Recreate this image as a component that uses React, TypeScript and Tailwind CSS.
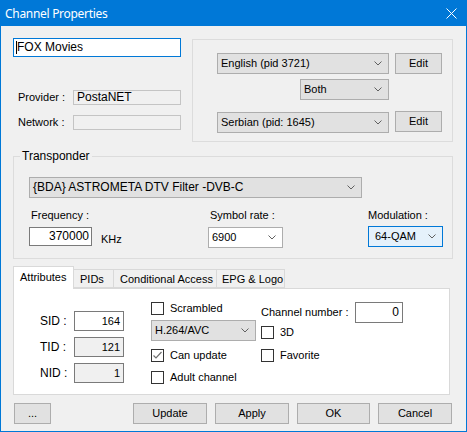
import React from 'react';

function Chevron() {
    return (
        <svg width="8" height="5" viewBox="0 0 8 5" className="shrink-0">
            <polyline points="0.5,0.5 4,4 7.5,0.5" fill="none" stroke="#606060" strokeWidth="1" />
        </svg>
    );
}

function Combo({ text, className = '', focused = false }: { text: string; className?: string; focused?: boolean }) {
    const tone = focused ? 'border-[#0078d7] bg-[#e5f1fb]' : 'border-[#adadad] bg-[#e1e1e1]';
    return (
        <div className={`flex items-center justify-between h-[21px] border pl-[3px] pr-[6px] ${tone} ${className}`}>
            <span className="whitespace-nowrap">{text}</span>
            <Chevron />
        </div>
    );
}

function Button({ label, className = '' }: { label: string; className?: string }) {
    return (
        <div className={`flex items-center justify-center h-[21px] border border-[#adadad] bg-[#e1e1e1] ${className}`}>
            {label}
        </div>
    );
}

function CheckBox({ label, checked = false, className = '' }: { label: string; checked?: boolean; className?: string }) {
    return (
        <div className={`flex items-center h-[13px] ${className}`}>
            <div className="w-[13px] h-[13px] border border-[#333333] bg-white flex items-center justify-center">
                {checked && (
                    <svg width="9" height="9" viewBox="0 0 9 9">
                        <polyline points="0.5,4.5 3,7 8.5,1" fill="none" stroke="#707070" strokeWidth="1.2" />
                    </svg>
                )}
            </div>
            <span className="ml-[6px] whitespace-nowrap">{label}</span>
        </div>
    );
}

function NumBox({ value, disabled = false }: { value: string; disabled?: boolean }) {
    return (
        <div className={`flex items-center justify-end w-[50px] h-[20px] border border-[#7a7a7a] pr-[3px] ${disabled ? 'bg-[#f0f0f0]' : 'bg-white'}`}>
            {value}
        </div>
    );
}

export default function App() {
    return (
        <div className="w-[467px] h-[432px] bg-[#0078d7] flex flex-col px-px pb-px text-[11px] leading-[13px] text-black whitespace-nowrap font-['Liberation_Sans',Arial,sans-serif]">
            {/* title bar */}
            <div className="h-[26px] flex items-center justify-between pl-[4px] pr-[9px] text-white text-[12px] tracking-[-0.3px] font-['Noto_Sans','Liberation_Sans',sans-serif]">
                <span>Channel Properties</span>
                <svg width="11" height="11" viewBox="0 0 11 11">
                    <path d="M0.5 0.5 L10.5 10.5 M10.5 0.5 L0.5 10.5" stroke="white" strokeWidth="1" />
                </svg>
            </div>

            <div className="flex-1 bg-[#f0f0f0] flex flex-col">
                {/* top */}
                <div className="flex mt-[12px]">
                    <div className="ml-[12px] w-[168px] flex flex-col">
                        <div className="h-[19px] border border-[#0078d7] bg-white pl-[2px] flex items-center">
                            <span className="w-px h-[13px] bg-black" />
                            <span className="text-[12px]">FOX Movies</span>
                        </div>
                        <div className="flex items-center mt-[33px]">
                            <span className="w-[60px] pl-[5px]">Provider :</span>
                            <div className="w-[108px] h-[15px] border border-[#c4c4c4] bg-[#f0f0f0] pl-[3px] flex items-center">
                                <span className="text-[12px]">PostaNET</span>
                            </div>
                        </div>
                        <div className="flex items-center mt-[10px]">
                            <span className="w-[60px] pl-[5px]">Network :</span>
                            <div className="w-[108px] h-[15px] border border-[#c4c4c4] bg-[#f0f0f0]" />
                        </div>
                    </div>

                    <div className="ml-[11px] mt-px w-[261px] h-[103px] border border-[#dcdcdc] flex flex-col pt-[13px] pl-[24px]">
                        <div className="flex items-center">
                            <Combo text="English (pid 3721)" className="w-[172px]" />
                            <Button label="Edit" className="ml-[6px] w-[47px]" />
                        </div>
                        <Combo text="Both" className="ml-[83px] mt-[5px] w-[89px]" />
                        <div className="flex items-center mt-[12px]">
                            <Combo text="Serbian (pid: 1645)" className="w-[172px]" />
                            <Button label="Edit" className="ml-[6px] w-[47px] -mt-[2px]" />
                        </div>
                    </div>
                </div>

                {/* transponder */}
                <div className="relative ml-[12px] mt-[14px] w-[440px] h-[103px] border border-[#dcdcdc] flex flex-col pt-[20px] pl-[15px]">
                    <span className="absolute -top-[7px] left-[6px] px-[2px] bg-[#f0f0f0] text-[12px]">Transponder</span>
                    <Combo text="{BDA} ASTROMETA DTV Filter -DVB-C" className="w-[333px] text-[12px]" />
                    <div className="flex mt-[11px]">
                        <div className="w-[179px] flex flex-col">
                            <span className="pl-[2px]">Frequency :</span>
                            <div className="flex items-end mt-[5px]">
                                <div className="w-[63px] h-[19px] border border-[#7a7a7a] bg-white flex items-center justify-end pr-[2px] text-[12px]">370000</div>
                                <span className="ml-[9px]">KHz</span>
                            </div>
                        </div>
                        <div className="w-[160px] flex flex-col">
                            <span className="pl-[2px]">Symbol rate :</span>
                            <Combo text="6900" className="mt-[5px] w-[75px] bg-white border-[#7a7a7a]" />
                        </div>
                        <div className="flex flex-col">
                            <span>Modulation :</span>
                            <Combo text="64-QAM" focused className="mt-[4px] w-[75px] pl-[6px]" />
                        </div>
                    </div>
                </div>

                {/* tabs */}
                <div className="flex items-end ml-[12px] mt-[7px]">
                    <div className="relative z-10 -mb-px w-[61px] h-[23px] border border-b-0 border-[#d9d9d9] bg-white pl-[6px] pt-[4px]">Attributes</div>
                    <div className="w-[40px] h-[19px] border border-l-0 border-[#d9d9d9] pl-[6px] pt-[3px]">PIDs</div>
                    <div className="w-[103px] h-[19px] border border-l-0 border-[#d9d9d9] pl-[6px] pt-[3px]">Conditional Access</div>
                    <div className="w-[68px] h-[19px] border border-l-0 border-[#d9d9d9] pl-[5px] pt-[3px]">EPG &amp; Logo</div>
                </div>
                <div className="ml-[12px] w-[437px] h-[107px] border border-[#d9d9d9] bg-white flex">
                    <div className="flex flex-col pl-[26px] pt-[22px] gap-[6px]">
                        {[
                            ['SID :', '164', false],
                            ['TID :', '121', true],
                            ['NID :', '1', true],
                        ].map(([label, value, disabled]) => (
                            <div key={label as string} className="flex items-center">
                                <span className="w-[34px] text-[12px]">{label}</span>
                                <NumBox value={value as string} disabled={disabled as boolean} />
                            </div>
                        ))}
                    </div>
                    <div className="flex flex-col ml-[27px] pt-[13px] w-[105px]">
                        <CheckBox label="Scrambled" />
                        <Combo text="H.264/AVC" className="mt-[5px] w-[105px]" />
                        <CheckBox label="Can update" checked className="mt-[8px]" />
                        <CheckBox label="Adult channel" className="mt-[9px]" />
                    </div>
                    <div className="flex flex-col ml-[5px] pt-[13px]">
                        <div className="flex items-center">
                            <span className="w-[94px]">Channel number :</span>
                            <div className="w-[48px] h-[21px] border border-[#7a7a7a] bg-white flex items-center justify-end pr-[3px] text-[12px]">0</div>
                        </div>
                        <CheckBox label="3D" className="mt-[3px]" />
                        <CheckBox label="Favorite" className="mt-[10px]" />
                    </div>
                </div>

                {/* buttons */}
                <div className="flex mt-[8px]">
                    <Button label="..." className="ml-[13px] w-[37px]" />
                    <div className="ml-auto mr-[14px] flex gap-[8px]">
                        <Button label="Update" className="w-[74px]" />
                        <Button label="Apply" className="w-[74px]" />
                        <Button label="OK" className="w-[73px]" />
                        <Button label="Cancel" className="w-[74px]" />
                    </div>
                </div>
            </div>
        </div>
    );
}
